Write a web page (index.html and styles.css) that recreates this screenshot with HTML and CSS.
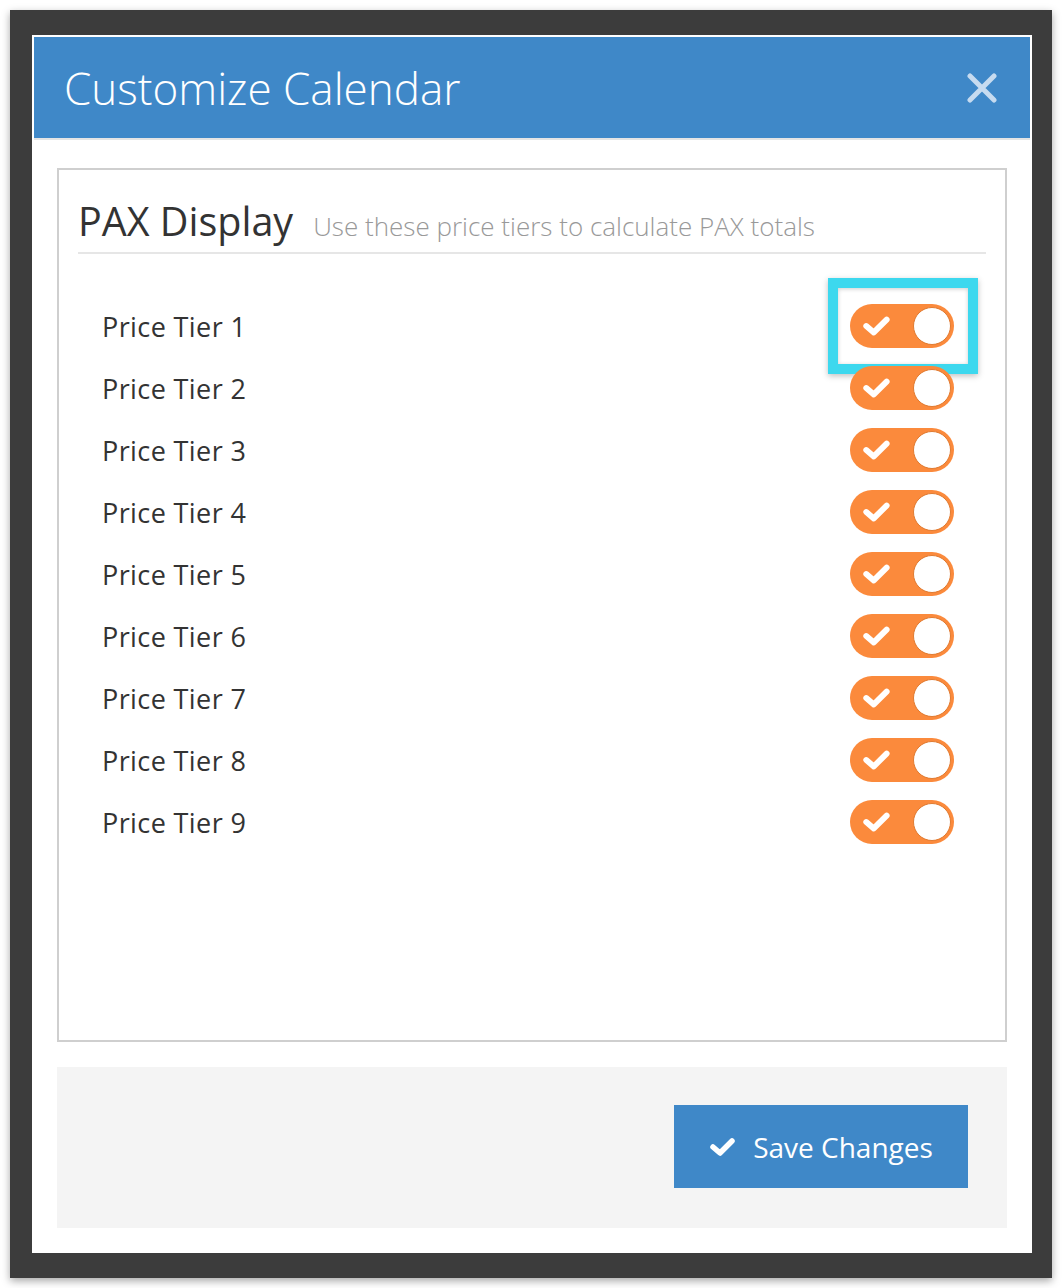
FILE: index.html
```html
<!DOCTYPE html>
<html lang="en">
<head>
  <meta charset="UTF-8">
  <meta name="viewport" content="width=device-width, initial-scale=1.0">
  <title>Customize Calendar</title>
  <link rel="stylesheet" href="styles.css">
</head>
<body>
  <div class="backdrop">
    <div class="modal">

      <!-- Header -->
      <div class="modal-header">
        <h2>Customize Calendar</h2>
        <svg class="close" width="30" height="30" viewBox="0 0 30 30">
          <path d="M3 3 L27 27 M27 3 L3 27" stroke="#c6dbf0" stroke-width="5" stroke-linecap="round"/>
        </svg>
      </div>

      <!-- Settings panel -->
      <div class="panel">
        <div class="panel-title">
          <h3>PAX Display</h3>
          <span class="hint">Use these price tiers to calculate PAX totals</span>
        </div>

        <div class="tiers">
          <div class="tier">
            <span>Price Tier 1</span>
            <div class="toggle highlighted">
              <svg class="check" width="30" height="24" viewBox="0 0 28 22"><path d="M4 11 L11 17 L23 5" fill="none" stroke="#fff" stroke-width="5.5" stroke-linecap="round" stroke-linejoin="round"/></svg>
              <span class="knob"></span>
              <span class="focus-ring"></span>
            </div>
          </div>
          <div class="tier">
            <span>Price Tier 2</span>
            <div class="toggle">
              <svg class="check" width="30" height="24" viewBox="0 0 28 22"><path d="M4 11 L11 17 L23 5" fill="none" stroke="#fff" stroke-width="5.5" stroke-linecap="round" stroke-linejoin="round"/></svg>
              <span class="knob"></span>
            </div>
          </div>
          <div class="tier">
            <span>Price Tier 3</span>
            <div class="toggle">
              <svg class="check" width="30" height="24" viewBox="0 0 28 22"><path d="M4 11 L11 17 L23 5" fill="none" stroke="#fff" stroke-width="5.5" stroke-linecap="round" stroke-linejoin="round"/></svg>
              <span class="knob"></span>
            </div>
          </div>
          <div class="tier">
            <span>Price Tier 4</span>
            <div class="toggle">
              <svg class="check" width="30" height="24" viewBox="0 0 28 22"><path d="M4 11 L11 17 L23 5" fill="none" stroke="#fff" stroke-width="5.5" stroke-linecap="round" stroke-linejoin="round"/></svg>
              <span class="knob"></span>
            </div>
          </div>
          <div class="tier">
            <span>Price Tier 5</span>
            <div class="toggle">
              <svg class="check" width="30" height="24" viewBox="0 0 28 22"><path d="M4 11 L11 17 L23 5" fill="none" stroke="#fff" stroke-width="5.5" stroke-linecap="round" stroke-linejoin="round"/></svg>
              <span class="knob"></span>
            </div>
          </div>
          <div class="tier">
            <span>Price Tier 6</span>
            <div class="toggle">
              <svg class="check" width="30" height="24" viewBox="0 0 28 22"><path d="M4 11 L11 17 L23 5" fill="none" stroke="#fff" stroke-width="5.5" stroke-linecap="round" stroke-linejoin="round"/></svg>
              <span class="knob"></span>
            </div>
          </div>
          <div class="tier">
            <span>Price Tier 7</span>
            <div class="toggle">
              <svg class="check" width="30" height="24" viewBox="0 0 28 22"><path d="M4 11 L11 17 L23 5" fill="none" stroke="#fff" stroke-width="5.5" stroke-linecap="round" stroke-linejoin="round"/></svg>
              <span class="knob"></span>
            </div>
          </div>
          <div class="tier">
            <span>Price Tier 8</span>
            <div class="toggle">
              <svg class="check" width="30" height="24" viewBox="0 0 28 22"><path d="M4 11 L11 17 L23 5" fill="none" stroke="#fff" stroke-width="5.5" stroke-linecap="round" stroke-linejoin="round"/></svg>
              <span class="knob"></span>
            </div>
          </div>
          <div class="tier">
            <span>Price Tier 9</span>
            <div class="toggle">
              <svg class="check" width="30" height="24" viewBox="0 0 28 22"><path d="M4 11 L11 17 L23 5" fill="none" stroke="#fff" stroke-width="5.5" stroke-linecap="round" stroke-linejoin="round"/></svg>
              <span class="knob"></span>
            </div>
          </div>
        </div>
      </div>

      <!-- Footer -->
      <div class="modal-footer">
        <button type="button" class="save">
          <svg width="28" height="22" viewBox="0 0 28 22"><path d="M4 11 L11 17 L23 5" fill="none" stroke="#fff" stroke-width="5.5" stroke-linecap="round" stroke-linejoin="round"/></svg>
          Save Changes
        </button>
      </div>

    </div>
  </div>
</body>
</html>
```

FILE: styles.css
```css
body {
  margin: 0;
  padding: 10px;
  background-color: #fff;
  font-family: "Open Sans", "Noto Sans", sans-serif;
  color: #333;
}
.backdrop {
  width: 1042px;
  height: 1268px;
  box-sizing: border-box;
  padding: 25px 0 0 22px;
  background-color: #3c3c3c;
  box-shadow: 0 3px 8px rgba(0, 0, 0, 0.35);
}
.modal {
  width: 1000px;
  height: 1218px;
  box-sizing: border-box;
  padding: 2px;
  background-color: #fff;
}
.modal-header {
  height: 101px;
  display: flex;
  align-items: center;
  justify-content: space-between;
  padding: 0 33px 0 30px;
  background-color: #3f88c8;
  border-bottom: 2px solid #e4e4e4;
}
.modal-header h2 {
  margin: 0;
  font-size: 44px;
  font-weight: 300;
  color: #fff;
}
.panel {
  margin: 28px 23px 0 23px;
  height: 874px;
  box-sizing: border-box;
  border: 2px solid #cfcfcf;
  padding: 24px 19px 0 19px;
}
.panel-title {
  display: flex;
  align-items: baseline;
  gap: 20px;
  padding-bottom: 4px;
  border-bottom: 2px solid #e6e6e6;
}
.panel-title h3 {
  margin: 0;
  font-size: 39.5px;
  font-weight: 400;
  color: #333;
}
.hint {
  font-size: 26px;
  font-weight: 300;
  color: #999;
}
.tiers {
  padding: 41px 32px 0 24px;
}
.tier {
  height: 62px;
  display: flex;
  align-items: center;
  justify-content: space-between;
  font-size: 27px;
  letter-spacing: 0.4px;
}
.toggle {
  position: relative;
  width: 104px;
  height: 44px;
  box-sizing: border-box;
  border-radius: 22px;
  background-color: #fb8a3c;
  display: flex;
  align-items: center;
  justify-content: space-between;
  padding: 0 3px 0 12px;
}
.knob {
  width: 38px;
  height: 38px;
  box-sizing: border-box;
  border-radius: 50%;
  background-color: #fff;
  border: 1px solid #e07a30;
}
.focus-ring {
  position: absolute;
  left: -22px;
  top: -26px;
  width: 150px;
  height: 96px;
  box-sizing: border-box;
  border: 10px solid #3dd8ee;
  box-shadow: 0 2px 6px rgba(0, 0, 0, 0.25), inset 0 1px 4px rgba(0, 0, 0, 0.2);
}
.modal-footer {
  margin: 25px 23px 0 23px;
  height: 161px;
  box-sizing: border-box;
  background-color: #f4f4f4;
  display: flex;
  justify-content: flex-end;
  align-items: flex-start;
  padding: 38px 39px 0 0;
}
.save {
  width: 294px;
  height: 83px;
  display: flex;
  align-items: center;
  justify-content: center;
  gap: 16px;
  border: none;
  background-color: #3f88c8;
  color: #fff;
  font-family: "Open Sans", "Noto Sans", sans-serif;
  font-size: 28px;
  cursor: pointer;
}
```
